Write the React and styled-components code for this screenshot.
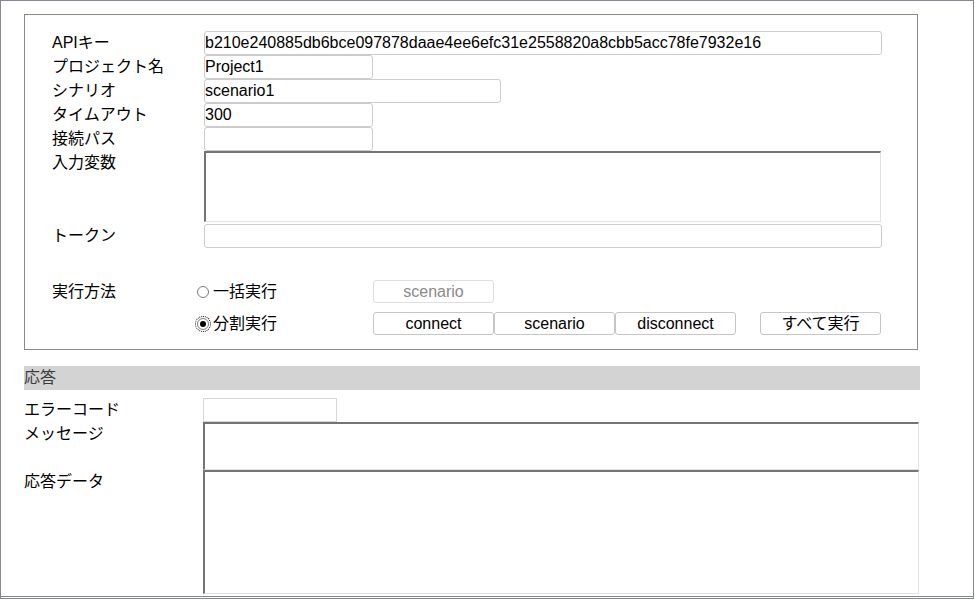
import React from "react";
import styled, { createGlobalStyle } from "styled-components";

const GlobalStyle = createGlobalStyle`
  html, body {
    margin: 0;
    padding: 0;
    background: #ffffff;
  }
  body {
    font-family: "Liberation Sans", "Noto Sans CJK JP", sans-serif;
    font-size: 16px;
    color: #000;
  }
`;

function App() {
  return (
    <>
      <GlobalStyle />
      <Frame>
        <RequestBox>
          <Row>
            <Label>APIキー</Label>
            <TextInput width={678} defaultValue="b210e240885db6bce097878daae4ee6efc31e2558820a8cbb5acc78fe7932e16" />
          </Row>
          <Row>
            <Label>プロジェクト名</Label>
            <TextInput width={169} defaultValue="Project1" />
          </Row>
          <Row>
            <Label>シナリオ</Label>
            <TextInput width={297} defaultValue="scenario1" />
          </Row>
          <Row>
            <Label>タイムアウト</Label>
            <TextInput width={169} defaultValue="300" />
          </Row>
          <Row>
            <Label>接続パス</Label>
            <TextInput width={169} defaultValue="" />
          </Row>
          <Row>
            <Label>入力変数</Label>
            <TextArea width={677} height={71} gapBelow={2} />
          </Row>
          <Row>
            <Label>トークン</Label>
            <TextInput width={678} defaultValue="" />
          </Row>

          <MethodGrid>
            <MethodLabel>実行方法</MethodLabel>
            <RadioLabel>
              <Radio type="radio" name="mode" />
              一括実行
            </RadioLabel>
            <ButtonGroup>
              <Button disabled>scenario</Button>
            </ButtonGroup>

            <span />
            <RadioLabel>
              <Radio type="radio" name="mode" defaultChecked focused />
              分割実行
            </RadioLabel>
            <ButtonGroup>
              <Button>connect</Button>
              <Button>scenario</Button>
              <Button>disconnect</Button>
              <Button spaced>すべて実行</Button>
            </ButtonGroup>
          </MethodGrid>
        </RequestBox>

        <SectionBar>応答</SectionBar>

        <ResponseRows>
          <ResponseRow>
            <ResponseLabel>エラーコード</ResponseLabel>
            <CodeInput />
          </ResponseRow>
          <ResponseRow>
            <ResponseLabel>メッセージ</ResponseLabel>
            <TextArea width={716} height={48} />
          </ResponseRow>
          <ResponseRow>
            <ResponseLabel>応答データ</ResponseLabel>
            <TextArea width={716} height={124} />
          </ResponseRow>
        </ResponseRows>
      </Frame>
    </>
  );
}

export default App;

const Frame = styled.div`
  width: 974px;
  height: 599px;
  box-sizing: border-box;
  border: 1px solid #878792;
  border-bottom: 3px double #878792;
  padding: 13px 0 0 23px;
  overflow: hidden;
`;

const RequestBox = styled.div`
  width: 894px;
  height: 336px;
  box-sizing: border-box;
  border: 1px solid #8a8a8a;
  padding: 16px 0 0 27px;
`;

const Row = styled.div`
  display: flex;
  align-items: flex-start;
`;

const Label = styled.div`
  width: 152px;
  flex-shrink: 0;
  line-height: 24px;
  height: 24px;
  white-space: nowrap;
`;

const TextInput = styled.input.attrs({ type: "text" })`
  width: ${(p) => p.width}px;
  height: 24px;
  box-sizing: border-box;
  margin: 0;
  padding: 0;
  border: 1px solid #cccccc;
  border-radius: 3px;
  font-family: "Liberation Sans", "Noto Sans CJK JP", sans-serif;
  font-size: 16px;
  color: #000;
  background: #fff;
  outline: none;
`;

const TextArea = styled.textarea`
  display: block;
  width: ${(p) => p.width}px;
  height: ${(p) => p.height}px;
  box-sizing: border-box;
  margin: 0 0 ${(p) => p.gapBelow || 0}px 0;
  padding: 1px;
  border-style: solid;
  border-width: 2px 1px 1px 2px;
  border-color: #747474 #e2e2e2 #e2e2e2 #747474;
  resize: none;
  font-family: "Liberation Sans", "Noto Sans CJK JP", sans-serif;
  font-size: 16px;
  outline: none;
`;

const MethodGrid = styled.div`
  display: grid;
  grid-template-columns: 144px 177px 1fr;
  grid-auto-rows: 23px;
  row-gap: 9px;
  margin-top: 32px;
  align-items: center;
`;

const MethodLabel = styled.div`
  line-height: 22px;
  white-space: nowrap;
`;

const RadioLabel = styled.label`
  display: flex;
  align-items: center;
  gap: 4px;
  line-height: 22px;
  white-space: nowrap;
`;

const Radio = styled.input`
  appearance: none;
  width: 12px;
  height: 12px;
  margin: 0 0 0 1px;
  box-sizing: border-box;
  border: 1px solid #7a7a7a;
  border-radius: 50%;
  background: #fff;
  position: relative;
  outline: ${(p) => (p.focused ? "1px dotted #000" : "none")};
  outline-offset: 1px;

  &:checked::after {
    content: "";
    position: absolute;
    left: 2px;
    top: 2px;
    width: 6px;
    height: 6px;
    border-radius: 50%;
    background: #000;
  }
`;

const ButtonGroup = styled.div`
  display: flex;
  align-items: center;
`;

const Button = styled.button`
  width: 121px;
  height: 23px;
  box-sizing: border-box;
  margin: 0 0 0 ${(p) => (p.spaced ? "24px" : "0")};
  padding: 0;
  border: 1px solid ${(p) => (p.disabled ? "#dddddd" : "#c6c6c6")};
  border-radius: 3px;
  background: #fff;
  color: ${(p) => (p.disabled ? "#8a8a8a" : "#000")};
  font-family: "Liberation Sans", "Noto Sans CJK JP", sans-serif;
  font-size: 16px;
  line-height: 20px;
`;

const SectionBar = styled.div`
  width: 896px;
  height: 24px;
  margin-top: 16px;
  background: #d3d3d3;
  color: #3c3c3c;
  line-height: 24px;
`;

const ResponseRows = styled.div`
  margin-top: 8px;
  display: flex;
  flex-direction: column;
`;

const ResponseRow = styled.div`
  display: flex;
  align-items: flex-start;
`;

const ResponseLabel = styled.div`
  width: 179px;
  flex-shrink: 0;
  line-height: 24px;
  white-space: nowrap;
`;

const CodeInput = styled.input.attrs({ type: "text" })`
  width: 134px;
  height: 24px;
  box-sizing: border-box;
  margin: 0;
  padding: 0 1px;
  border: 1px solid #d8d8d8;
  border-radius: 0;
  font-family: "Liberation Sans", sans-serif;
  font-size: 16px;
  outline: none;
`;
